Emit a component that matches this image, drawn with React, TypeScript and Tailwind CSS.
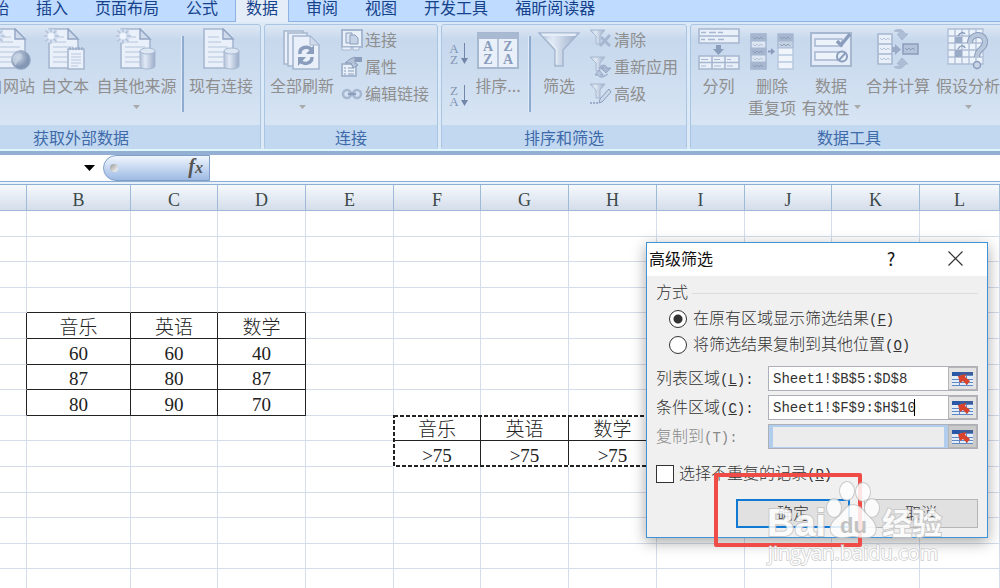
import type { ReactNode } from "react"
import clsx from "clsx"

const SANS = "font-['Noto_Sans_CJK_SC',sans-serif]"
const SONG = "font-['Liberation_Serif','Noto_Sans_CJK_SC',serif]"
const MONO = "font-['Liberation_Mono','Noto_Sans_CJK_SC',monospace]"

const INK = "#a6b7d0"
const DARK = "#8a9dbc"
const PAPER = "#e9f0fa"


/* ---------- ribbon icons ---------- */

const Sheet = ({ x = 0, y = 0 }: { x?: number, y?: number }) => (
  <g transform={`translate(${x} ${y})`}>
    <path d="M1 1H20L30 11V40H1Z" fill={PAPER} stroke={INK} strokeWidth="1.600" />
    <path d="M20 1V11H30Z" fill="#cfdaea" stroke="#92a5c3" strokeWidth="1.400" />
    <path d="M5 9H16M5 14H18M5 19H25M5 24H25M5 29H25M5 34H20" stroke="#c6d3e6" strokeWidth="1.400" />
  </g>
)

// burst of light over the top left corner of a sheet
const Spark = () => (
  <>
    <circle cx="7" cy="8" r="7" fill="#d3dff0" />
    <path d="M7 0V16M-1 8H15M1.500 2.500L12.500 13.500M12.500 2.500L1.500 13.500" stroke="#b3c2d9" strokeWidth="1.500" />
    <circle cx="7" cy="8" r="3.500" fill="#eef4fc" />
  </>
)

const Cylinder = () => (
  <g stroke={INK} strokeWidth="1">
    <path d="M24 23V38C24 42 39 42 39 38V23" fill="url(#metal)" />
    <ellipse cx="31.500" cy="23" rx="7.500" ry="3" fill="#dde7f3" />
  </g>
)

const BigIcon = ({ children }: { children: ReactNode }) => (
  <svg width="42" height="42" viewBox="0 0 42 42" fill="none" aria-hidden="true">{children}</svg>
)

const WebIcon = () => (
  <BigIcon>
    <Sheet x={5} />
    <Spark />
    <circle cx="31" cy="32" r="9.500" fill="url(#ball)" stroke={INK} />
    <path d="M23 28C27 24 32 24 32 28S26 33 26 38C23 35 22 31 23 28Z" fill="#c9d5e6" opacity=".7" />
  </BigIcon>
)

const TextFileIcon = () => (
  <BigIcon>
    <Sheet x={4} />
    <Spark />
    <path d="M24 21H40V41H24Z" fill="#eaf1fa" stroke={INK} strokeWidth="1.600" />
    <path d="M26 19V22M29 19V22M32 19V22M35 19V22M38 19V22" stroke={DARK} />
    <path d="M27 26H37M27 29H37M27 32H37M27 35H37M27 38H34" stroke="#b9c8de" />
  </BigIcon>
)

const SourceIcon = () => (
  <BigIcon><Sheet x={4} /><Spark /><Cylinder /></BigIcon>
)

const ConnIcon = () => (
  <BigIcon><Sheet x={3} /><Cylinder /></BigIcon>
)

const RefreshIcon = () => (
  <BigIcon>
    <path d="M3 3H22V36H3Z" fill={PAPER} stroke={INK} strokeWidth="1.600" />
    <path d="M7 5H26V38H7Z" fill={PAPER} stroke={INK} strokeWidth="1.600" />
    <path d="M12 8H29L38 17V41H12Z" fill={PAPER} stroke={INK} strokeWidth="1.600" />
    <path d="M29 8V17H38Z" fill="#cfdaea" stroke={INK} />
    <path d="M19 26C18 19 27 17 31 22" stroke={DARK} strokeWidth="3.500" />
    <path d="M33 17V26H25Z" fill={DARK} />
    <path d="M31 29C31 36 23 37 19 33" stroke={DARK} strokeWidth="3.500" />
    <path d="M17 38V29H25Z" fill={DARK} />
  </BigIcon>
)

const SortIcon = () => (
  <BigIcon>
    <path d="M1 5H41V40H1Z" fill={PAPER} stroke={INK} strokeWidth="2" />
    <path d="M1 5H41V11H1Z" fill="#a9b9d2" />
    <path d="M21 11V40" stroke={INK} strokeWidth="1.500" />
    <g fill={DARK} fontFamily="Liberation Serif" fontWeight="bold" fontSize="14" textAnchor="middle">
      <text x="11" y="23">A</text>
      <text x="11" y="36">Z</text>
      <text x="31" y="23">Z</text>
      <text x="31" y="36">A</text>
    </g>
  </BigIcon>
)

const FunnelIcon = () => (
  <BigIcon>
    <path d="M1 5H41L25 22V38H17V22Z" fill="url(#metal)" stroke={INK} strokeWidth="1.600" />
    <path d="M3 5.500H39L37 8H5Z" fill="#e6eef8" />
    <path d="M10 11L18.500 21V36" stroke="#e4ecf6" strokeWidth="1.500" />
  </BigIcon>
)

const SplitIcon = () => (
  <BigIcon>
    <path d="M1 1H41V15H1ZM1 8H41" fill={PAPER} stroke={INK} strokeWidth="1.600" />
    <path d="M3 4.500H8M11 4.500H18M20 4.500H25M3 11.500H7M10 11.500H17M20 11.500H26" stroke={INK} strokeWidth="1.500" />
    <path d="M18 17H23V21H26L20.500 27L15 21H18Z" fill={DARK} />
    <path d="M1 28H41V41H1ZM1 34.500H41M14 28V41M27 28V41" fill={PAPER} stroke={INK} strokeWidth="1.600" />
    <path d="M3 31.500H10M16 31.500H22M29 31.500H33M3 38H8M16 38H23M29 38H35" stroke={INK} />
  </BigIcon>
)

const RemoveIcon = () => (
  <svg width="44" height="42" viewBox="0 0 44 42" fill="none" aria-hidden="true">
    <path d="M1 6H16V41H1Z" fill="#dde7f3" stroke={INK} strokeWidth="1.500" />
    <path d="M1 6H16V13H1ZM1 20H16V27H1ZM1 34H16V41H1Z" fill="#a6b6cf" stroke={INK} />
    <path d="M3 9l2 2 2-2 2 2 2-2 2 2M3 23l2 2 2-2 2 2 2-2 2 2M3 37l2 2 2-2 2 2 2-2 2 2" stroke="#8a9cba" />
    <path d="M3 16l2 2 2-2 2 2 2-2 2 2M3 30l2 2 2-2 2 2 2-2 2 2" stroke="#b6c4da" />
    <path d="M18 23.500H23" stroke={DARK} strokeWidth="2" />
    <path d="M21 20L25 23.500L21 27Z" fill={DARK} />
    <path d="M28 6H43V41H28ZM28 27H43M28 34H43" fill="#f0f5fc" stroke="#b7c7de" strokeWidth="1.500" />
    <path d="M28 6H43V13H28Z" fill="#a6b6cf" stroke={INK} />
    <path d="M28 13H43V20H28Z" fill="#c4d1e3" stroke={INK} />
    <path d="M30 9l2 2 2-2 2 2 2-2 2 2M30 16l2 2 2-2 2 2 2-2 2 2" stroke="#8a9cba" />
  </svg>
)

const ValidIcon = () => (
  <BigIcon>
    <path d="M1 5H41V38H1Z" fill="#e3ecf8" stroke={INK} strokeWidth="2" />
    <path d="M5 11H32V18H5ZM5 24H30V32H5Z" fill="#edf3fb" stroke={INK} strokeWidth="1.500" />
    <path d="M27 13L31 17L40 6" stroke={DARK} strokeWidth="3.500" />
    <circle cx="32" cy="28.500" r="5" fill={PAPER} stroke={DARK} strokeWidth="2" />
    <path d="M29 32L35.500 25" stroke={DARK} strokeWidth="2" />
  </BigIcon>
)

const MergeIcon = () => (
  <BigIcon>
    <path d="M1 6H15V36H1ZM1 16H15M1 26H15" fill={PAPER} stroke={INK} strokeWidth="1.600" />
    <path d="M3 10l2 2 2-2 2 2 2-2 2 2M3 20l2 2 2-2 2 2 2-2 2 2M3 30l2 2 2-2 2 2 2-2 2 2" stroke="#b6c4da" />
    <path d="M15 19H18V16L24 21.500L18 27V24H15Z" fill="#9aabc7" />
    <path d="M26 16H41V26H26Z" fill="#b5c3da" stroke={DARK} strokeWidth="1.500" />
    <path d="M28 20l2 2 2-2 2 2 2-2 2 2" stroke={DARK} />
    <path d="M17 3C22 0 27 2 28 6H31L25 12L20 6H23C23 4 20 3 17 3Z" fill="#aebdd5" stroke={INK} />
    <path d="M17 39C22 42 27 40 28 36H31L25 30L20 36H23C23 38 20 39 17 39Z" fill="#aebdd5" stroke={INK} />
  </BigIcon>
)

const WhatIfIcon = () => (
  <BigIcon>
    <path d="M1 1H36V36H1ZM8 1V36M15 1V36M22 1V36M29 1V36M1 8H36M1 15H36M1 22H36M1 29H36" fill="#edf3fb" stroke="#aebdd5" strokeWidth="1.300" />
    <path d="M8 9H15V15H8ZM8 22H15V29H8Z" fill="#9aabc7" />
    <path d="M11 8C13 4 17 4 18 6M11 21C13 17 17 17 18 20" stroke={DARK} strokeWidth="1.500" />
    <path d="M23 15C23 5 38 4 38 14C38 22 30 20 30 29" stroke={DARK} strokeWidth="6" />
    <path d="M23 15C23 5 38 4 38 14C38 22 30 20 30 29" stroke="#b9c7dc" strokeWidth="4" />
    <circle cx="30" cy="37" r="3.500" fill="#c9d5e6" stroke={DARK} strokeWidth="1.500" />
  </BigIcon>
)

const SmallIcon = ({ children }: { children: ReactNode }) => (
  <svg width="22" height="22" viewBox="0 0 22 22" fill="none" className="shrink-0" aria-hidden="true">{children}</svg>
)

const SmallConn = () => (
  <SmallIcon>
    <path d="M1 1H21V18H1Z" fill={PAPER} stroke={INK} strokeWidth="2" />
    <path d="M5 4H11V14H5Z" fill="#dce6f3" stroke={DARK} />
    <path d="M9 6H14L17 9V15H9Z" fill="#c6d3e6" stroke={DARK} />
    <path d="M1 18H10V21H1ZM12 18H18V21H12Z" fill={PAPER} stroke={INK} />
  </SmallIcon>
)

const SmallProps = () => (
  <SmallIcon>
    <path d="M1 8H15V20H1Z" fill={PAPER} stroke={INK} strokeWidth="2" />
    <path d="M3 12H5M7 12H13M3 15H5M7 15H13M3 18H5M7 18H13" stroke={DARK} />
    <path d="M4 7L9 3L14 1V7L17 9L12 12L10 7Z" fill="#b5c3d9" stroke={DARK} />
    <path d="M14 1H21V6H14Z" fill="#8b9dbb" />
  </SmallIcon>
)

const SmallLink = () => (
  <SmallIcon>
    <g stroke={INK} strokeWidth="2.500">
      <rect x="2" y="7" width="8" height="8" rx="4" />
      <rect x="12" y="7" width="8" height="8" rx="4" />
      <path d="M7 11H15" stroke={DARK} />
    </g>
  </SmallIcon>
)

const MiniFunnel = () => (
  <path d="M0 1H15L10 7V15H6V7Z" fill="url(#metal)" stroke={INK} />
)

const SmallClear = () => (
  <SmallIcon><MiniFunnel /><path d="M11 8L20 17M20 6L10 17" stroke="#a6b7d0" strokeWidth="3" /></SmallIcon>
)

const SmallReapply = () => (
  <SmallIcon>
    <MiniFunnel />
    <path d="M9 13C11 8 16 8 17 12H21L16 17L11 12H14" fill="#a9b9d1" stroke={DARK} strokeWidth=".8" />
    <path d="M18 18C14 22 9 22 8 19H5L9 14L13 19H10" fill="#b9c7dc" stroke={DARK} strokeWidth=".8" />
  </SmallIcon>
)

const SmallAdvanced = () => (
  <SmallIcon>
    <MiniFunnel />
    <path d="M19 6L21 9L12 19L9 20L10 16Z" fill="#ccd8e9" stroke={DARK} />
    <path d="M0 20H8" stroke={DARK} strokeWidth="1.500" strokeDasharray="2 1" />
  </SmallIcon>
)

const OrderIcon = ({ top, bottom }: { top: string, bottom: string }) => (
  <svg width="20" height="26" viewBox="0 0 20 26" aria-hidden="true">
    <g fill="#8195b4" fontFamily="Liberation Serif" fontSize="13" textAnchor="middle">
      <text x="5" y="12">{top}</text>
      <text x="5" y="23">{bottom}</text>
    </g>
    <path d="M15.500 2V18" stroke="#7186a8" />
    <path d="M12 17H19L15.500 23Z" fill="#7186a8" />
  </svg>
)

const RangeIcon = () => (
  <svg width="21" height="16" viewBox="0 0 21 16" fill="none" aria-hidden="true">
    <path d="M0 1H21V15H0Z" fill="#e4edfa" />
    <path d="M0 4.500H21M0 8.500H21M0 11.500H21M0 14.500H21M7.500 1V15M14.500 1V15" stroke="#5f88c4" />
    <path d="M0 1H8V5H0Z" fill="#2b57a7" />
    <path d="M8 1H21V4H8Z" fill="#3c5f9c" />
    <path d="M6 5L14 3L13 6L18 10L15 14L11 10L8 12Z" fill="#d9432c" />
  </svg>
)

const Caret = () => (
  <svg width="7" height="4" viewBox="0 0 7 4" aria-hidden="true"><path d="M0 0H7L3.500 4Z" fill="#a9a9a9" /></svg>
)


/* ---------- ribbon ---------- */

type BigButtonProps = {
  icon: ReactNode,
  lines: string[],
  width: string,
  menu?: boolean,
}

const BigButton = ({ icon, lines, width, menu }: BigButtonProps) => (
  <button type="button" className={clsx("flex shrink-0 flex-col items-center whitespace-nowrap pt-[3px]", width)}>
    {icon}
    <span className="mt-1 leading-[22px]">{lines[0]}</span>
    {(lines[1] || menu) && (
      <span className="flex h-[22px] items-center gap-1 leading-[22px]">
        {lines[1]}
        {menu && <Caret />}
      </span>
    )}
  </button>
)

const SmallButton = ({ icon, label }: { icon: ReactNode, label: string }) => (
  <button type="button" className="flex h-[27px] items-center gap-[2px] whitespace-nowrap leading-[27px]">
    {icon}
    {label}
  </button>
)

const Separator = () => (
  <div className="mt-[11px] h-[76px] w-[3px] shrink-0 border-l border-[#e2ecf7] bg-[#8fabd0]" />
)

const Group = ({ title, className, children }: { title: string, className: string, children: ReactNode }) => (
  <section className={clsx("flex h-[126px] shrink-0 flex-col overflow-hidden rounded-[3px] border border-[#a9c5e2] bg-linear-to-b from-[#dde8f4] from-0% via-[#c7d8ed] via-12% to-[#dbe8f5]", className)}>
    <div className="flex flex-1 items-start px-[2px]">{children}</div>
    <h2 className="h-6 bg-[#c1d8f0] text-center leading-6 text-[#3e6aaa]">{title}</h2>
  </section>
)

const tabs = ["开始", "插入", "页面布局", "公式", "数据", "审阅", "视图", "开发工具", "福昕阅读器"]

const Ribbon = () => (
  <header className={clsx("text-base", SANS)}>
    <nav className="-ml-9 flex h-[22px] gap-px border-b border-[#8db2e3] bg-[#bfdbff] text-[#15428b]">
      {tabs.map((tab) => (
        <button
          key={tab}
          type="button"
          className={clsx(
            "h-[22px] shrink-0 pb-2 leading-[14px]",
            tab === "数据" ? "mx-[3px] border-x border-[#8db2e3] bg-[#e4edf8] px-[10px]" : "px-[13px]"
          )}
        >
          {tab}
        </button>
      ))}
    </nav>

    <div className="flex h-[129px] gap-[3px] overflow-hidden border-b-2 border-[#def6fa] bg-[#dce9f6] pt-[2px] text-[#8f8f8f]">
      <Group title="获取外部数据" className="-ml-[99px] w-[360px] [&>div]:justify-end">
        <BigButton icon={<WebIcon />} lines={["自网站"]} width="w-[54px]" />
        <BigButton icon={<TextFileIcon />} lines={["自文本"]} width="w-[54px]" />
        <BigButton icon={<SourceIcon />} lines={["自其他来源"]} width="w-[89px]" menu />
        <Separator />
        <BigButton icon={<ConnIcon />} lines={["现有连接"]} width="w-[74px]" />
      </Group>

      <Group title="连接" className="w-[174px]">
        <BigButton icon={<RefreshIcon />} lines={["全部刷新"]} width="w-[70px]" menu />
        <div className="ml-1 pt-px">
          <SmallButton icon={<SmallConn />} label="连接" />
          <SmallButton icon={<SmallProps />} label="属性" />
          <SmallButton icon={<SmallLink />} label="编辑链接" />
        </div>
      </Group>

      <Group title="排序和筛选" className="w-[246px]">
        <div className="ml-[5px] mr-1 flex flex-col gap-4 pt-4">
          <button type="button" aria-label="升序"><OrderIcon top="A" bottom="Z" /></button>
          <button type="button" aria-label="降序"><OrderIcon top="Z" bottom="A" /></button>
        </div>
        <BigButton icon={<SortIcon />} lines={["排序..."]} width="w-[50px]" />
        <div className="ml-[5px]"><Separator /></div>
        <BigButton icon={<FunnelIcon />} lines={["筛选"]} width="w-[56px]" />
        <div className="ml-[3px] pt-px">
          <SmallButton icon={<SmallClear />} label="清除" />
          <SmallButton icon={<SmallReapply />} label="重新应用" />
          <SmallButton icon={<SmallAdvanced />} label="高级" />
        </div>
      </Group>

      <Group title="数据工具" className="w-[318px]">
        <BigButton icon={<SplitIcon />} lines={["分列"]} width="w-[51px]" />
        <BigButton icon={<RemoveIcon />} lines={["删除", "重复项"]} width="w-[56px]" />
        <BigButton icon={<ValidIcon />} lines={["数据", "有效性"]} width="w-[62px]" menu />
        <BigButton icon={<MergeIcon />} lines={["合并计算"]} width="w-[72px]" />
        <BigButton icon={<WhatIfIcon />} lines={["假设分析"]} width="w-[68px]" menu />
      </Group>
    </div>
  </header>
)

const FormulaBar = () => (
  <div className="flex h-[31px] border-b border-t-4 border-b-[#8fafd4] border-t-[#93afd3] bg-white">
    <button type="button" aria-label="名称框" className="flex w-[103px] items-center justify-end pr-2">
      <svg width="11" height="6" viewBox="0 0 11 6"><path d="M0 0H11L5.500 6Z" fill="#000" /></svg>
    </button>
    <button
      type="button"
      className="flex w-[107px] items-center justify-between rounded-l-full border border-[#7f9fc8] bg-linear-to-b from-[#f0f6fe] to-[#9dbae3] pl-[6px] pr-[6px] font-['Liberation_Serif',serif] text-xl font-bold italic leading-none text-[#555]"
    >
      <span className="size-2 rounded-full bg-linear-to-br from-[#999] to-white" />
      <span>f<span className="text-base">x</span></span>
    </button>
    <input aria-label="编辑栏" className="min-w-0 flex-1 bg-white px-2 outline-none" />
  </div>
)


/* ---------- sheet ---------- */

const columns = [
  { name: "A", width: "w-[27px]" },
  { name: "B", width: "w-[104px]" },
  { name: "C", width: "w-[87px]" },
  { name: "D", width: "w-[88px]" },
  { name: "E", width: "w-[88px]" },
  { name: "F", width: "w-[87px]" },
  { name: "G", width: "w-[88px]" },
  { name: "H", width: "w-[88px]" },
  { name: "I", width: "w-[88px]" },
  { name: "J", width: "w-[87px]" },
  { name: "K", width: "w-[88px]" },
  { name: "L", width: "" },
]

const cells: Record<string, string> = {
  B5: "音乐", C5: "英语", D5: "数学",
  B6: "60", C6: "60", D6: "40",
  B7: "87", C7: "80", D7: "87",
  B8: "80", C8: "90", D8: "70",
  F9: "音乐", G9: "英语", H9: "数学",
  F10: ">75", G10: ">75", H10: ">75",
}

// a cell draws its own right and bottom line
const lineClass = (col: string, row: number) => {
  const inScores = row >= 5 && row <= 8
  const right = (inScores && "ABCD".includes(col)) || ((row === 9 || row === 10) && "FG".includes(col))
  const bottom = (row >= 4 && row <= 8 && "BCD".includes(col)) || (row === 9 && "FGH".includes(col))
  return clsx(right ? "border-r-[#222]" : "border-r-[#d5dcea]", bottom ? "border-b-[#222]" : "border-b-[#d5dcea]")
}

const rowHeights = ["h-[26px]", "h-[25px]", "h-[26px]", "h-[25px]", "h-[26px]"]

const Ants = () => (
  <svg className="absolute -left-px -top-px" width="265" height="52" fill="none" aria-hidden="true">
    <rect x="1" y="1" width="263" height="50" stroke="#fff" strokeWidth="2" />
    <rect x="1" y="1" width="263" height="50" stroke="#222" strokeWidth="2" strokeDasharray="4 2" />
  </svg>
)

const Grid = () => (
  <table className={clsx("w-full table-fixed border-separate border-spacing-0 text-center", SONG)}>
    <thead>
      <tr className="bg-linear-to-b from-[#f6f9fc] to-[#d3dcea]">
        {columns.map(({ name, width }) => (
          <th key={name} className={clsx("h-[26px] border-b border-r border-[#9ebad8] p-0 pt-1 text-lg font-normal leading-none text-[#3c4a4a]", width)}>
            {name !== "A" && name}
          </th>
        ))}
      </tr>
    </thead>
    <tbody className="text-[19px] font-light leading-none text-[#222]">
      {Array.from({ length: 15 }, (_, i) => i + 1).map((row) => (
        <tr key={row}>
          {columns.map(({ name }) => (
            <td
              key={name}
              className={clsx("relative whitespace-nowrap border-b border-r p-0", rowHeights[(row - 1) % 5], lineClass(name, row), name + row === "F9" && "z-10")}
            >
              <div className="flex h-6 items-center justify-center pt-[3px]">{cells[name + row]}</div>
              {name + row === "F9" && <Ants />}
            </td>
          ))}
        </tr>
      ))}
    </tbody>
  </table>
)


/* ---------- dialog ---------- */

const Key = ({ k, plain, colon }: { k: string, plain?: boolean, colon?: boolean }) => (
  <span className={clsx("text-sm", MONO)}>(<span className={plain ? "" : "underline"}>{k}</span>){colon && ":"}</span>
)

type FieldProps = {
  id: string,
  label: string,
  k: string,
  value: string,
  disabled?: boolean,
}

const Field = ({ id, label, k, value, disabled }: FieldProps) => (
  <div className="flex h-[25px] items-center">
    <label htmlFor={id} className={clsx("w-28 whitespace-nowrap", disabled && "text-[#8a8a8a]")}>
      {label}<Key k={k} plain={disabled} colon />
    </label>
    <div className="flex h-full min-w-0 flex-1 border border-[#adb0b8]">
      <div className="relative flex min-w-0 flex-1">
        <input
          id={id}
          defaultValue={value}
          disabled={disabled}
          className={clsx("w-full text-sm leading-none outline-none", MONO, disabled ? "border-x-4 border-b border-t-2 border-[#b0cdee] bg-[#ececec]" : "bg-white pl-1")}
        />
        {id === "criteria" && <span className="absolute left-[145px] top-[3px] h-[17px] w-px bg-black" />}
      </div>
      <button type="button" aria-label={`选择${label}`} className={clsx("flex w-[29px] items-center justify-center border border-[#b5b5b5]", disabled ? "bg-[#cacaca]" : "bg-[#e3e3e3]")}>
        <RangeIcon />
      </button>
    </div>
  </div>
)

const radioClass = "size-[18px] appearance-none rounded-full border border-[#333] bg-white checked:bg-[radial-gradient(circle,#333_4px,#fff_5px)]"

const FilterDialog = () => (
  <div role="dialog" aria-labelledby="dialog-title" className={clsx("absolute left-[646px] top-[242px] z-20 w-[342px] border border-[#3f94d8] bg-[#f0f0f0] text-base font-light leading-[26px] text-[#333] shadow-[0_4px_14px_rgba(0,0,0,0.35)]", SONG)}>
    <div className={clsx("flex h-[33px] items-center bg-white pb-[3px] pl-[2px] font-normal text-[#111]", SANS)}>
      <h1 id="dialog-title" className="flex-1">高级筛选</h1>
      <button type="button" aria-label="帮助" className="w-16 text-lg">?</button>
      <button type="button" aria-label="关闭" className="flex w-16 justify-center">
        <svg width="15" height="15" viewBox="0 0 15 15" stroke="#333" strokeWidth="1.200"><path d="M.5 .5L14.500 14.500M14.500 .5L.5 14.500" /></svg>
      </button>
    </div>

    <form className="px-[9px] pb-[9px] pt-1" onSubmit={(e) => e.preventDefault()}>
      <fieldset>
        <div className="flex items-center gap-1">
          <legend>方式</legend>
          <div className="h-px flex-1 bg-[#dcdcdc]" />
        </div>
        <label className="flex items-center gap-[6px] whitespace-nowrap pl-[13px]">
          <input type="radio" name="mode" defaultChecked className={radioClass} />
          <span>在原有区域显示筛选结果<Key k="F" /></span>
        </label>
        <label className="flex items-center gap-[6px] whitespace-nowrap pl-[13px]">
          <input type="radio" name="mode" className={radioClass} />
          <span>将筛选结果复制到其他位置<Key k="O" /></span>
        </label>
      </fieldset>

      <div className="mt-2 flex flex-col gap-1">
        <Field id="list" label="列表区域" k="L" value="Sheet1!$B$5:$D$8" />
        <Field id="criteria" label="条件区域" k="C" value="Sheet1!$F$9:$H$10" />
        <Field id="copy" label="复制到" k="T" value="" disabled />
      </div>

      <label className="mt-3 flex items-center gap-[5px] whitespace-nowrap">
        <input type="checkbox" className="size-[18px] appearance-none border border-[#333] bg-white" />
        <span>选择不重复的记录<Key k="R" /></span>
      </label>

      <div className="mt-3 flex justify-end gap-[14px]">
        <button type="submit" className="h-[29px] w-[114px] border-2 border-[#1079d3] bg-[#e1e1e1]">确定</button>
        <button type="button" className="h-[29px] w-[114px] border border-[#b5b5b5] bg-[#e1e1e1]">取消</button>
      </div>
    </form>
  </div>
)

const Watermark = () => (
  <svg className="pointer-events-none absolute left-[764px] top-[476px] z-40" width="184" height="92" viewBox="0 0 184 92" aria-hidden="true">
    <g fill="#fff" stroke="#c4c4c4" strokeWidth="2" opacity=".85" paintOrder="stroke">
      <text x="3" y="60" fontFamily="Liberation Sans" fontWeight="bold" fontSize="38">Bai</text>
      <ellipse cx="70" cy="32" rx="7" ry="9" />
      <ellipse cx="83" cy="15" rx="7" ry="9" />
      <ellipse cx="99" cy="16" rx="7" ry="9" />
      <ellipse cx="108" cy="32" rx="7" ry="9" />
      <path d="M89 29C97 29 100 37 106 42C114 49 114 61 103 61C98 62 94 60 89 60C84 60 80 62 75 61C64 60 65 48 72 43C79 38 82 29 89 29Z" />
      <text x="118" y="58" fontFamily="Noto Sans CJK SC" fontWeight="bold" fontSize="30">经验</text>
      <text x="4" y="84" fontFamily="Open Sans" fontSize="20" strokeWidth="1.500">jingyan.baidu.com</text>
    </g>
    <text x="76" y="57" fontFamily="Liberation Sans" fontWeight="bold" fontSize="22" fill="#c2c2c2">du</text>
  </svg>
)


export default function App() {
  return (
    <main className="relative h-screen w-full overflow-hidden bg-white">
      <svg width="0" height="0" className="absolute" aria-hidden="true">
        <defs>
          <linearGradient id="metal">
            <stop offset="0" stopColor="#b3c2d9" />
            <stop offset=".35" stopColor="#e0e9f5" />
            <stop offset="1" stopColor="#9bacc8" />
          </linearGradient>
          <radialGradient id="ball" cx=".35" cy=".35">
            <stop offset="0" stopColor="#ccd7e7" />
            <stop offset="1" stopColor="#8497b5" />
          </radialGradient>
        </defs>
      </svg>

      <Ribbon />
      <FormulaBar />
      <div className="h-[3px] border-b border-[#8fafd4] bg-[#e9f1fa]" />
      <Grid />

      <FilterDialog />
      <div className="pointer-events-none absolute left-[714px] top-[473px] z-30 h-[74px] w-[148px] rounded-[2px] border-4 border-[#ef4b47]" />
      <Watermark />
    </main>
  )
}
